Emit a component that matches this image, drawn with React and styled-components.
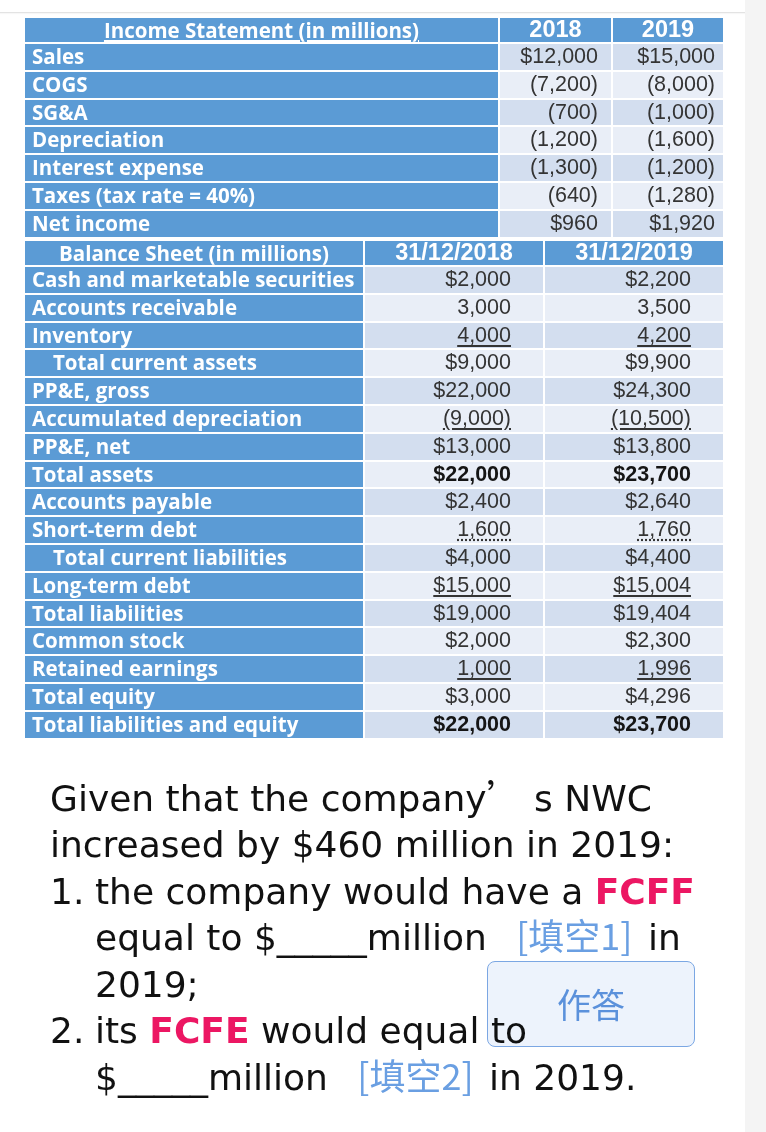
import React from 'react';
import styled, { createGlobalStyle } from 'styled-components';

const GlobalStyle = createGlobalStyle`
  html, body { margin: 0; padding: 0; background: #fff; }
  body { font-family: "Liberation Sans", Arial, sans-serif; }
`;

const Page = styled.div`
  display: flex;
  min-height: 1132px;
`;

const Main = styled.main`
  width: 745px;
  flex: none;
  background: #fff;
`;

const SideStrip = styled.aside`
  flex: 1;
  background: #f4f4f4;
`;

const TopBar = styled.div`
  height: 12px;
  border-bottom: 1px solid #e3e3e3;
  box-shadow: 0 1px 1px rgba(0, 0, 0, 0.03);
`;

const Content = styled.div`
  padding: 5px 0 0 25px;
`;

const Sheet = styled.div`
  display: grid;
  grid-template-columns: ${(p) => p.$cols};
  grid-template-rows: 24px;
  grid-auto-rows: 25.8px;
  gap: 2px;
  width: 698px;
  & + & {
    margin-top: 4.4px;
  }
`;

const HeadCell = styled.div`
  background: #5b9bd5;
  color: #fff;
  display: flex;
  align-items: center;
  justify-content: center;
  font: 700 23.5px/1 "Liberation Sans", Arial, sans-serif;
`;

const TitleCell = styled(HeadCell)`
  font: 700 20.5px/1 "Open Sans", sans-serif;
  text-decoration: ${(p) => (p.$underline ? 'underline' : 'none')};
  text-underline-offset: 2px;
`;

const LabelCell = styled.div`
  background: #5b9bd5;
  color: #fff;
  font: 700 20.5px/25.8px "Open Sans", sans-serif;
  padding-left: ${(p) => (p.$indent ? 28 : 7)}px;
  white-space: nowrap;
`;

const ValueCell = styled.div`
  background: ${(p) => (p.$shade ? '#d3deef' : '#e9eef7')};
  text-align: right;
  padding-right: ${(p) => p.$pad}px;
  font: ${(p) => (p.$bold ? 700 : 400)} 21.5px/25.8px "Liberation Sans", Arial, sans-serif;
  color: ${(p) => (p.$bold ? '#151515' : '#343434')};
  white-space: nowrap;
`;

const Num = styled.span`
  text-decoration: ${(p) =>
    p.$line === 'solid' ? 'underline' : p.$line === 'dotted' ? 'underline dotted' : 'none'};
  text-underline-offset: 3px;
`;

const Question = styled.div`
  position: relative;
  margin: 38px 0 0 25px;
  font: 400 36px/46.5px "DejaVu Sans", sans-serif;
  color: #111;
  white-space: nowrap;
`;

const Line = styled.div``;

const Item = styled.div`
  display: grid;
  grid-template-columns: 45px auto;
`;

const Marker = styled.span``;

const Em = styled.b`
  color: #ec1763;
  font-weight: 700;
`;

const Quote = styled.span`
  font-family: "Noto Sans CJK SC", sans-serif;
  line-height: 1;
`;

const Blank = styled.span`
  color: #6a9fe2;
  font-family: "Noto Sans CJK SC", sans-serif;
  line-height: 1;
  margin: 0 4px 0 18px;
`;

const AnswerBox = styled.div`
  position: absolute;
  left: 437px;
  top: 185.4px;
  width: 208px;
  height: 86px;
  box-sizing: border-box;
  border: 1.5px solid #7ba7e3;
  border-radius: 8px;
  background: #edf3fc;
  mix-blend-mode: multiply;
  display: flex;
  align-items: center;
  justify-content: center;
  color: #5b91db;
  font: 400 34px/1 "Noto Sans CJK SC", sans-serif;
`;

const income = [
  ['Sales', '$12,000', '$15,000'],
  ['COGS', '(7,200)', '(8,000)'],
  ['SG&A', '(700)', '(1,000)'],
  ['Depreciation', '(1,200)', '(1,600)'],
  ['Interest expense', '(1,300)', '(1,200)'],
  ['Taxes (tax rate = 40%)', '(640)', '(1,280)'],
  ['Net income', '$960', '$1,920'],
];

const balance = [
  { l: 'Cash and marketable securities', a: '$2,000', b: '$2,200' },
  { l: 'Accounts receivable', a: '3,000', b: '3,500' },
  { l: 'Inventory', a: '4,000', b: '4,200', line: 'solid' },
  { l: 'Total current assets', a: '$9,000', b: '$9,900', indent: true },
  { l: 'PP&E, gross', a: '$22,000', b: '$24,300' },
  { l: 'Accumulated depreciation', a: '(9,000)', b: '(10,500)', line: 'solid' },
  { l: 'PP&E, net', a: '$13,000', b: '$13,800' },
  { l: 'Total assets', a: '$22,000', b: '$23,700', bold: true },
  { l: 'Accounts payable', a: '$2,400', b: '$2,640' },
  { l: 'Short-term debt', a: '1,600', b: '1,760', line: 'dotted' },
  { l: 'Total current liabilities', a: '$4,000', b: '$4,400', indent: true },
  { l: 'Long-term debt', a: '$15,000', b: '$15,004', line: 'solid' },
  { l: 'Total liabilities', a: '$19,000', b: '$19,404' },
  { l: 'Common stock', a: '$2,000', b: '$2,300' },
  { l: 'Retained earnings', a: '1,000', b: '1,996', line: 'solid' },
  { l: 'Total equity', a: '$3,000', b: '$4,296' },
  { l: 'Total liabilities and equity', a: '$22,000', b: '$23,700', bold: true },
];

export default function App() {
  return (
    <>
      <GlobalStyle />
      <Page>
        <Main>
          <TopBar />
          <Content>
            <Sheet $cols="473px 111px 110px">
              <TitleCell $underline>Income Statement (in millions)</TitleCell>
              <HeadCell>2018</HeadCell>
              <HeadCell>2019</HeadCell>
              {income.map(([l, a, b], i) => (
                <React.Fragment key={l}>
                  <LabelCell>{l}</LabelCell>
                  <ValueCell $shade={i % 2 === 0} $pad={13}>{a}</ValueCell>
                  <ValueCell $shade={i % 2 === 0} $pad={8}>{b}</ValueCell>
                </React.Fragment>
              ))}
            </Sheet>
            <Sheet $cols="338px 178px 178px">
              <TitleCell>Balance Sheet (in millions)</TitleCell>
              <HeadCell>31/12/2018</HeadCell>
              <HeadCell>31/12/2019</HeadCell>
              {balance.map((r, i) => (
                <React.Fragment key={r.l}>
                  <LabelCell $indent={r.indent}>{r.l}</LabelCell>
                  <ValueCell $shade={i % 2 === 0} $pad={32} $bold={r.bold}>
                    <Num $line={r.line}>{r.a}</Num>
                  </ValueCell>
                  <ValueCell $shade={i % 2 === 0} $pad={32} $bold={r.bold}>
                    <Num $line={r.line}>{r.b}</Num>
                  </ValueCell>
                </React.Fragment>
              ))}
            </Sheet>
            <Question>
              <Line>
                Given that the company<Quote>’</Quote> s NWC
              </Line>
              <Line>increased by $460 million in 2019:</Line>
              <Item>
                <Marker>1.</Marker>
                <div>
                  <Line>
                    the company would have a <Em>FCFF</Em>
                  </Line>
                  <Line>
                    equal to $_____million <Blank>[填空1]</Blank> in
                  </Line>
                  <Line>2019;</Line>
                </div>
              </Item>
              <Item>
                <Marker>2.</Marker>
                <div>
                  <Line>
                    its <Em>FCFE</Em> would equal to
                  </Line>
                  <Line>
                    $_____million <Blank>[填空2]</Blank> in 2019.
                  </Line>
                </div>
              </Item>
              <AnswerBox>作答</AnswerBox>
            </Question>
          </Content>
        </Main>
        <SideStrip />
      </Page>
    </>
  );
}
